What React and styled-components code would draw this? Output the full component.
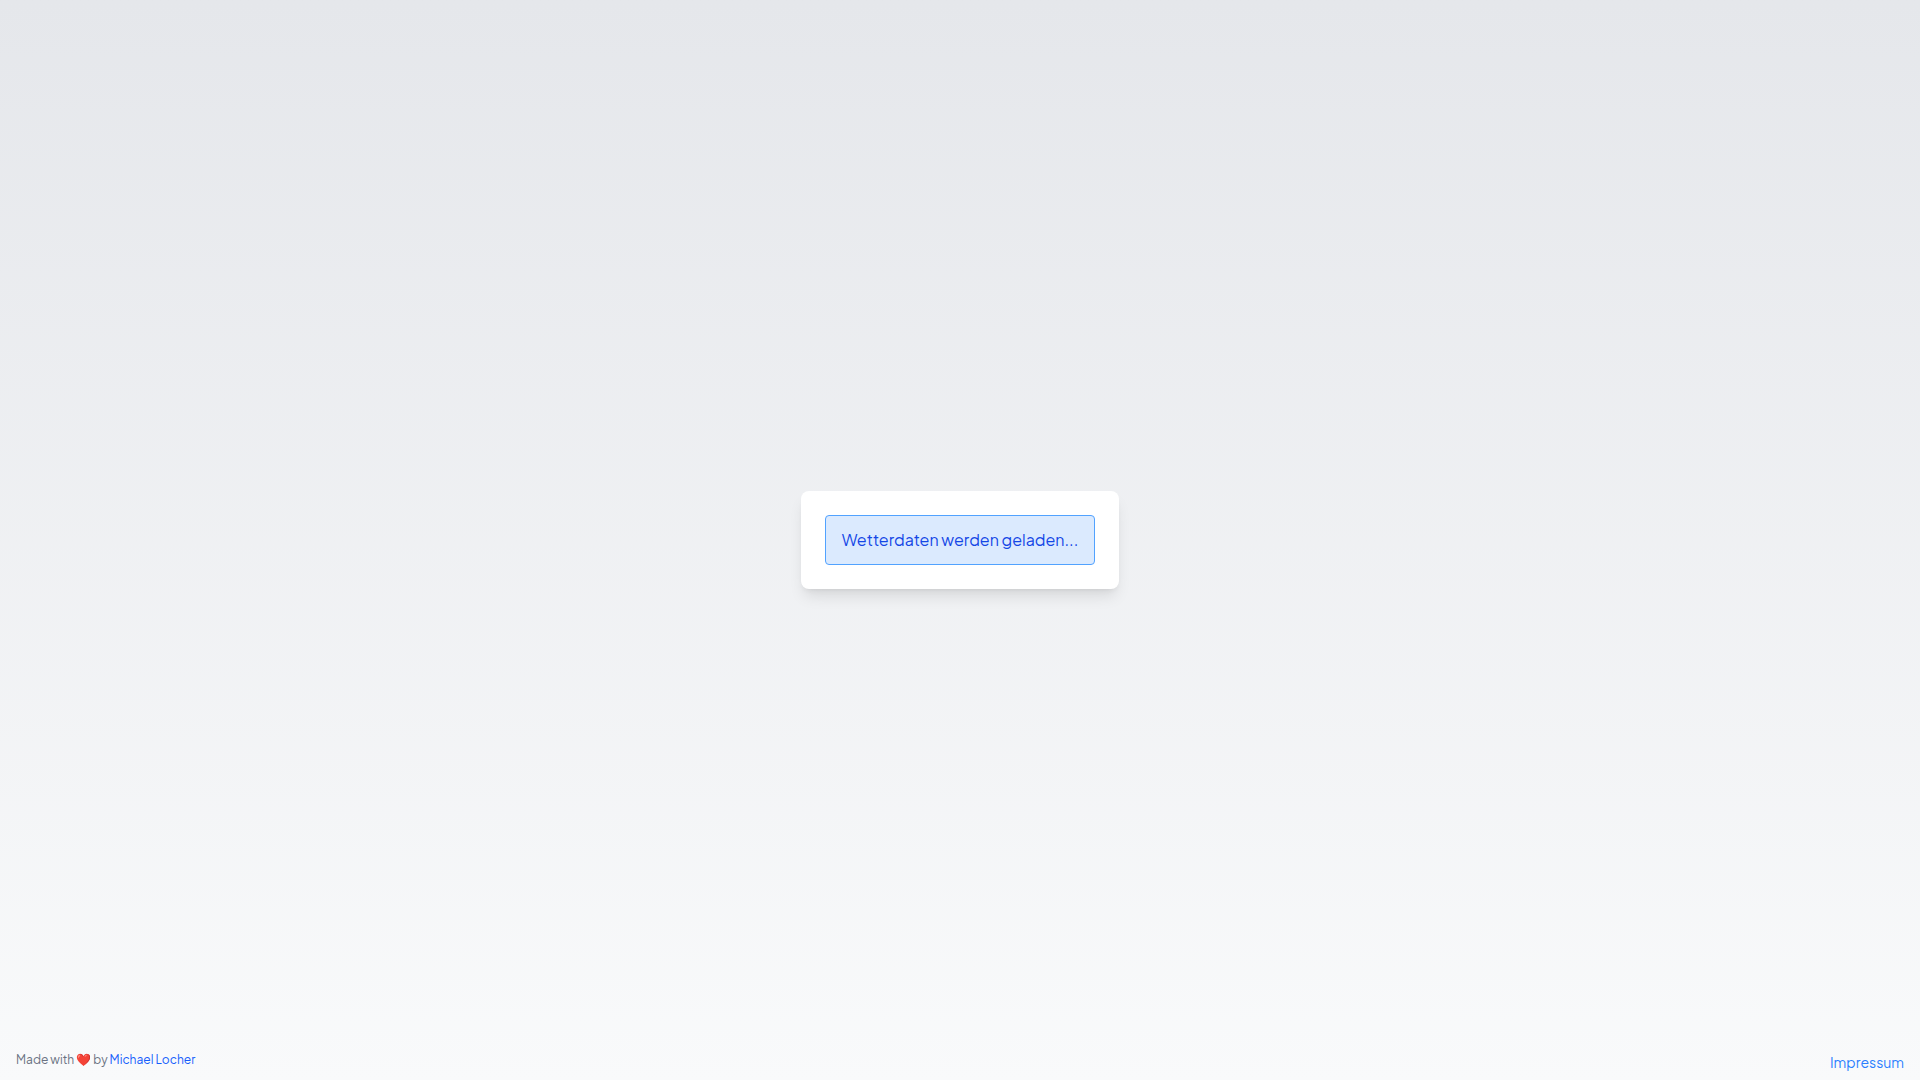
import React from 'react';
import styled, { createGlobalStyle } from 'styled-components';

const App = () => {
	return (
		<>
			<GlobalStyle />
			<Page>
				<Main>
					<Card>
						<Notice role="status">Wetterdaten werden geladen...</Notice>
					</Card>
				</Main>
				<Footer>
					<Credits>
						Made with ❤️ by <CreditsLink href="#author">Michael Locher</CreditsLink>
					</Credits>
					<ImprintLink href="#impressum">Impressum</ImprintLink>
				</Footer>
			</Page>
		</>
	);
};

export default App;

const GlobalStyle = createGlobalStyle`
	* {
		box-sizing: border-box;
	}

	body {
		margin: 0;
		font-family: 'Plus Jakarta Sans', Inter, sans-serif;
		font-size: 16px;
		line-height: 24px;
	}
`;

const Page = styled.div`
	display: grid;
	grid-template-rows: 1fr auto 1fr;
	min-height: 100vh;
	background: linear-gradient(to bottom in oklab, #e5e7eb, #f9fafb);
`;

const Main = styled.main`
	grid-row: 2;
	display: flex;
	justify-content: center;
`;

const Card = styled.section`
	padding: 24px;
	border-radius: 8px;
	background: #fff;
	box-shadow: 0 10px 15px -3px rgba(0, 0, 0, 0.1), 0 4px 6px -4px rgba(0, 0, 0, 0.1);
`;

const Notice = styled.div`
	min-width: 270px;
	padding: 12px 16px;
	border: 1px solid #51a2ff;
	border-radius: 4px;
	background: #dbeafe;
	color: #1447e6;
	text-align: center;
`;

const Footer = styled.footer`
	grid-row: 3;
	display: flex;
	justify-content: space-between;
	align-items: flex-start;
	align-self: end;
	padding: 0 16px 8px;
`;

const Credits = styled.p`
	margin: 0;
	color: #6a7282;
	font-size: 12px;
	line-height: 16px;
`;

const CreditsLink = styled.a`
	color: #155dfc;
	text-decoration: none;
`;

const ImprintLink = styled.a`
	color: #2b7fff;
	font-size: 14px;
	line-height: 20px;
	text-decoration: none;
`;
